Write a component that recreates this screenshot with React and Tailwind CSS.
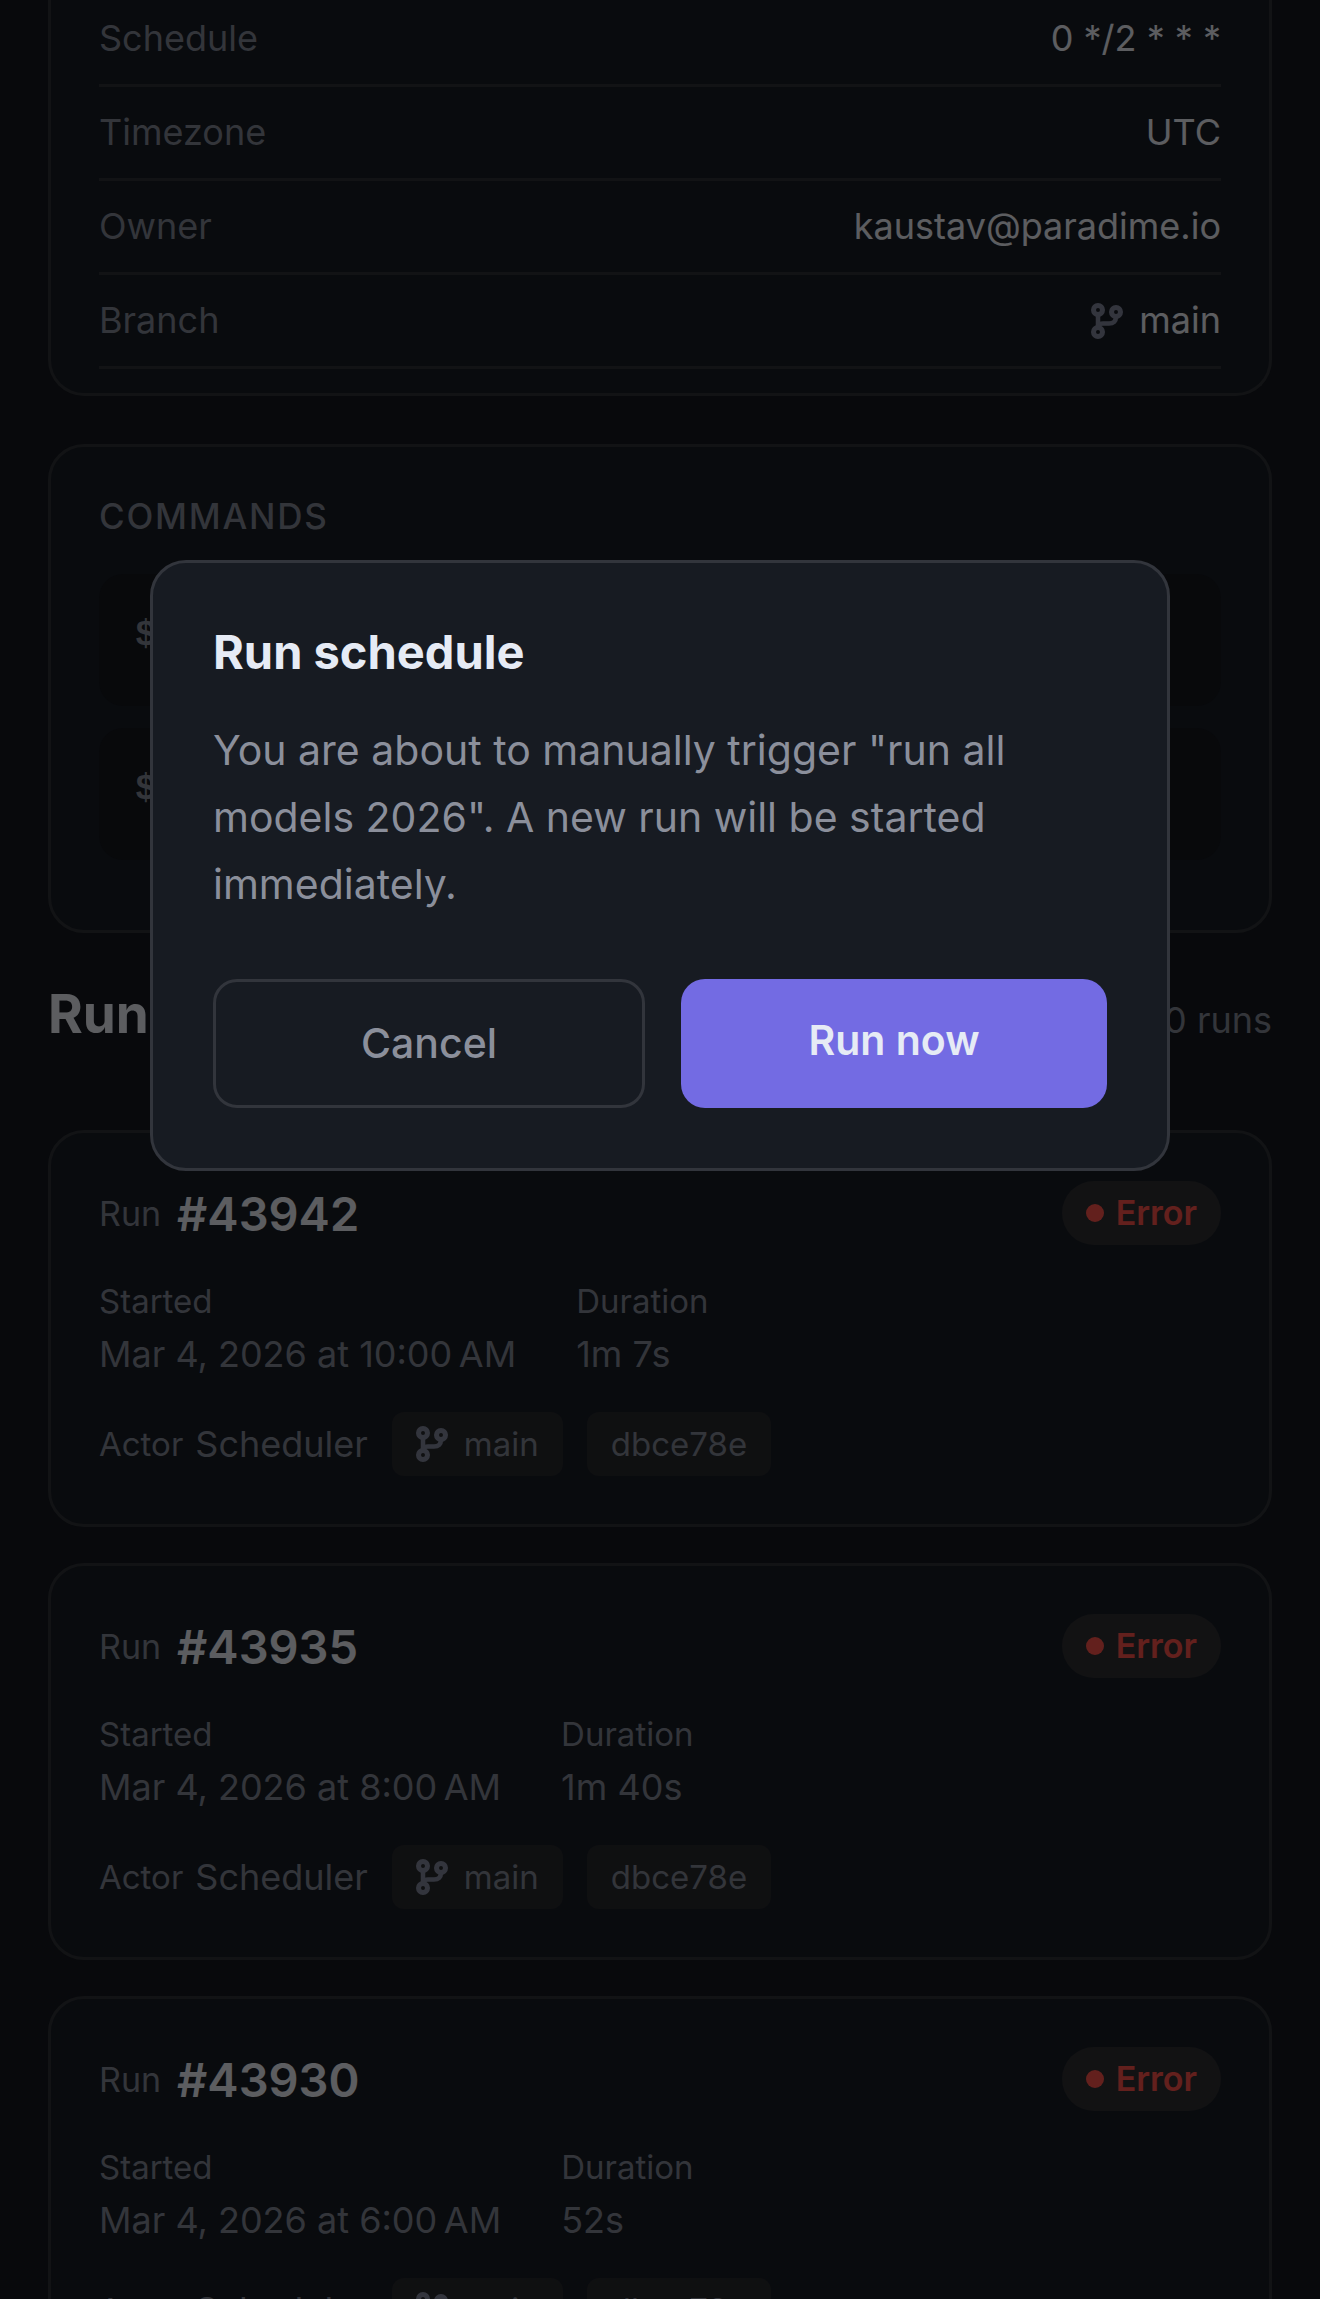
import React, { useState } from 'react';

const details = [
  { label: 'Schedule', value: '0 */2 * * *' },
  { label: 'Timezone', value: 'UTC' },
  { label: 'Owner', value: 'kaustav@paradime.io' },
  { label: 'Branch', value: 'main', icon: true },
];

const commands = ['dbt seed', 'dbt run'];

const runs = [
  { id: 43942, started: 'Mar 4, 2026 at 10:00\u202fAM', duration: '1m 7s' },
  { id: 43935, started: 'Mar 4, 2026 at 8:00\u202fAM', duration: '1m 40s' },
  { id: 43930, started: 'Mar 4, 2026 at 6:00\u202fAM', duration: '52s' },
];

function BranchIcon() {
  return (
    <svg
      viewBox="0 0 32 36"
      className="w-8 h-9 shrink-0 text-[#80869a]"
      fill="none"
      stroke="currentColor"
      strokeWidth="5"
      aria-hidden="true"
    >
      <circle cx="7" cy="7" r="4.5" />
      <circle cx="7" cy="29" r="4.5" />
      <circle cx="25" cy="9" r="4.5" />
      <path d="M7 11v14" strokeWidth="4.500" />
      <path d="M25 13v1c0 4-2.500 6.500-7 6.500H12c-2 0-4 .5-5 2" strokeWidth="4.500" />
    </svg>
  );
}

function RunCard({ run }) {
  return (
    <article className="p-12 bg-[#181c24] rounded-[36px] border-3 border-[#2e3136]">
      <div className="flex justify-between items-center h-16">
        <h3 className="flex items-center gap-4">
          <span className="text-[34px] leading-[43px] text-[#7f8492]">Run</span>
          <span className="text-[47px] leading-[55px] font-semibold text-[#e6e8ef]">
            #{run.id}
          </span>
        </h3>
        <span className="flex items-center gap-3 h-16 px-6 rounded-full bg-[#2d2e31] text-[34px] leading-10 font-semibold text-[#f85149]">
          <span className="size-[18px] rounded-full bg-[#f85149]" />
          Error
        </span>
      </div>

      <dl className="flex gap-[60px] mt-9 text-[#7f8492]">
        <div>
          <dt className="mb-3 text-[33px] leading-10">Started</dt>
          <dd className="text-[36px] leading-[43px]">{run.started}</dd>
        </div>
        <div>
          <dt className="mb-3 text-[33px] leading-10">Duration</dt>
          <dd className="text-[36px] leading-[43px]">{run.duration}</dd>
        </div>
      </dl>

      <div className="flex items-center gap-6 mt-9 text-[33px] leading-10 text-[#7f8492]">
        <div className="flex items-center gap-3">
          <span>Actor</span>
          <span className="text-[36px] leading-[43px]">Scheduler</span>
        </div>
        <span className="flex items-center gap-4 h-16 px-6 rounded-xl bg-[#27282c]">
          <BranchIcon />
          main
        </span>
        <span className="flex items-center h-16 px-6 rounded-xl bg-[#27282c]">
          dbce78e
        </span>
      </div>
    </article>
  );
}

function RunDialog({ onClose }) {
  return (
    <div className="fixed inset-0 z-50 px-12 pt-[560px] bg-black/60">
      <div
        role="dialog"
        aria-modal="true"
        aria-labelledby="run-dialog-title"
        className="mx-auto w-full max-w-[1020px] p-[60px] bg-[#171b22] rounded-[36px] border-3 border-[#32353c]"
      >
        <h2
          id="run-dialog-title"
          className="text-[47px] leading-[58px] font-bold text-[#e6ebf5]"
        >
          Run schedule
        </h2>
        <p className="mt-9 text-[41px] leading-[67px] text-[#8b8f9b]">
          You are about to manually trigger "run all models 2026". A new run
          will be started immediately.
        </p>
        <div className="flex gap-9 mt-[61px] text-[41px] leading-[51px]">
          <button
            type="button"
            onClick={onClose}
            className="flex flex-1 justify-center items-start py-9 rounded-3xl border-3 border-[#32353c] font-medium text-[#8b8f9b]"
          >
            Cancel
          </button>
          <button
            type="button"
            onClick={onClose}
            className="flex flex-1 justify-center items-start py-9 rounded-3xl bg-[#736be3] font-semibold text-[#e6ebf5]"
          >
            Run now
          </button>
        </div>
      </div>
    </div>
  );
}

export default function App() {
  const [isDialogOpen, setIsDialogOpen] = useState(true);

  return (
    <div className="h-screen overflow-hidden bg-[#14171e] font-['Inter',sans-serif]">
      <main className="px-12">
        {/* Schedule details */}
        <section className="px-12 pb-6 bg-[#181c24] rounded-b-[36px] border-3 border-t-0 border-[#2e3136]">
          <dl className="text-[36px] leading-[43px]">
            {details.map(({ label, value, icon }) => (
              <div
                key={label}
                className="flex justify-between items-center py-6 first:pt-[17px] border-b-3 border-[#2e3136]"
              >
                <dt className="text-[#7f8492]">{label}</dt>
                <dd className="flex items-center gap-4 text-[#e6e8ef]">
                  {icon && <BranchIcon />}
                  {value}
                </dd>
              </div>
            ))}
          </dl>
        </section>

        {/* Commands */}
        <section className="mt-12 px-12 pt-12 pb-[70px] bg-[#181c24] rounded-[36px] border-3 border-[#2e3136]">
          <h2 className="mb-9 text-[35px] leading-[43px] font-medium tracking-wider text-[#7f8492]">
            COMMANDS
          </h2>
          <div className="flex flex-col gap-[22px]">
            {commands.map(command => (
              <pre
                key={command}
                className="px-9 pt-10 pb-[49px] rounded-3xl bg-[#14171d] font-['Liberation_Mono',monospace] text-[36px] leading-[43px] text-[#e6e8ef]"
              >
                <span className="font-bold text-[#7f8492]">$</span> {command}
              </pre>
            ))}
          </div>
        </section>

        {/* Run history */}
        <div className="flex justify-between items-baseline mt-12 mb-[83px]">
          <h2 className="text-[53px] leading-[66px] font-bold text-[#e6e8ef]">
            Run history
          </h2>
          <span className="text-[36px] leading-[43px] text-[#7f8492]">
            50 runs
          </span>
        </div>
        <div className="flex flex-col gap-9">
          {runs.map(run => (
            <RunCard key={run.id} run={run} />
          ))}
        </div>
      </main>

      {isDialogOpen && <RunDialog onClose={() => setIsDialogOpen(false)} />}
    </div>
  );
}
